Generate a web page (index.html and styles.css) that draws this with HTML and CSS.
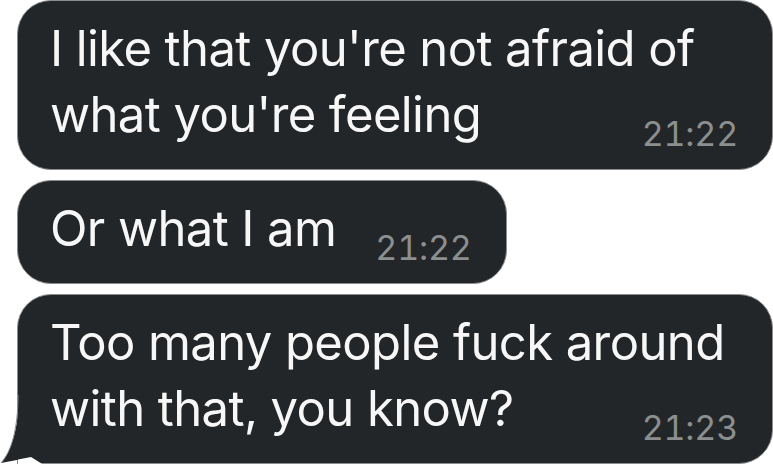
FILE: index.html
```html
<!DOCTYPE html>
<html lang="en">
<head>
<meta charset="utf-8">
<title>Messages</title>
<link rel="stylesheet" href="styles.css">
</head>
<body>
<div class="thread">
  <div class="bubble multi">
    <p class="text">I like that you're not afraid of what you're feeling</p>
    <span class="time">21:22</span>
  </div>
  <div class="bubble single">
    <p class="text">Or what I am</p>
    <span class="time">21:22</span>
  </div>
  <div class="bubble multi last">
    <p class="text">Too many people fuck around with that, you know?</p>
    <span class="time">21:23</span>
    <svg class="tail" width="60" height="72" viewBox="0 0 60 72" aria-hidden="true">
      <path d="M19.5,3 C18,38 11,60 1,71 L19.5,67.4 Z" fill="#232628"/>
      <path d="M18,3 C18,38 11,60 1,71" fill="none" stroke="#8a8c8d" stroke-width="1"/>
      <path d="M18,67.6 L31,65 L43,72.5 L18,72.5 Z" fill="#ffffff"/>
    </svg>
  </div>
</div>
</body>
</html>
```

FILE: styles.css
```css
* { box-sizing: border-box; }

html, body {
  margin: 0;
  padding: 0;
  background: #ffffff;
}

body {
  width: 773px;
  height: 465px;
  overflow: hidden;
  font-family: "Inter", "Noto Sans", sans-serif;
}

.thread {
  display: flex;
  flex-direction: column;
  align-items: flex-start;
  gap: 10px;
  padding-left: 17px;
}

.bubble {
  background: #232628;
  border: 1px solid #8a8c8d;
  border-radius: 34px;
  padding: 15px 34px 15px 32px;
  color: #f7f7f7;
}

.text {
  margin: 0;
  font-size: 49px;
  line-height: 66px;
  letter-spacing: -0.6px;
}

.time {
  font-size: 34px;
  line-height: 40px;
  color: #8c8f90;
  white-space: nowrap;
  font-variant-numeric: tabular-nums;
  letter-spacing: -0.2px;
}

.multi {
  align-self: stretch;
  display: flex;
  flex-direction: column;
}

.multi .time {
  align-self: flex-end;
  margin-top: -34px;
}

.single {
  display: flex;
  align-items: flex-end;
  gap: 39px;
}

.single .text {
  margin-bottom: 6px;
}

.last {
  position: relative;
  border-bottom-left-radius: 0;
}

.tail {
  position: absolute;
  left: -18px;
  bottom: -1px;
  overflow: visible;
}
```
